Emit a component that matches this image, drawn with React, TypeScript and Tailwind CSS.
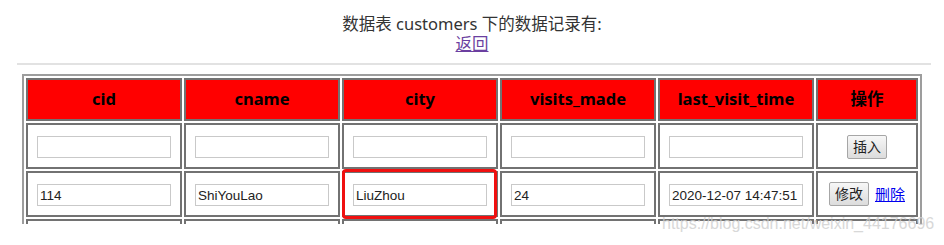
import React from "react";

const cols = ["cid", "cname", "city", "visits_made", "last_visit_time"];

function Cell({ children, last }: { children?: React.ReactNode; last?: boolean }) {
  return (
    <td
      className={`${last ? "w-[102px]" : "w-[156px]"} h-[46px] border-2 border-solid border-[#727272] bg-white p-0 text-center align-middle`}
    >
      {children}
    </td>
  );
}

function Field({ value }: { value?: string }) {
  return (
    <input
      type="text"
      defaultValue={value}
      className="box-border h-[22px] w-[134px] border border-solid border-[#c9c9c9] bg-white px-[2px] align-middle text-[13.5px] text-[#222] outline-none"
      style={{ fontFamily: '"Liberation Sans", Arial, sans-serif' }}
    />
  );
}

function Btn({ label }: { label: string }) {
  return (
    <button
      type="button"
      className="h-[24px] rounded-[2px] border border-solid border-[#a6a6a6] bg-gradient-to-b from-[#f7f7f7] to-[#dcdcdc] px-[5px] align-middle text-[14px] leading-[20px] text-[#222]"
    >
      {label}
    </button>
  );
}

export default function App() {
  return (
    <div
      className="relative h-[245px] w-[944px] overflow-hidden bg-white"
      style={{ fontFamily: '"Noto Sans", "Noto Sans CJK SC", sans-serif' }}
    >
      <div className="h-[224px] overflow-hidden">
        <div className="pt-[14px] text-center text-[16.5px] leading-[20px] text-[#333]">
          <div>数据表 customers 下的数据记录有:</div>
          <div>
            <a href="#" className="text-[#6b3fa0] underline">
              返回
            </a>
          </div>
        </div>
        <div className="ml-[17px] mt-[9px] h-[2px] w-[914px] bg-[#e2e2e2]" />
        <div className="mt-[9px] flex justify-center">
          <table className="w-[900px] border-separate border-spacing-[2px] border-2 border-solid border-[#9d9d9d]">
            <thead>
              <tr>
                {cols.map((c) => (
                  <th
                    key={c}
                    className="h-[43px] w-[156px] border-2 border-solid border-[#727272] bg-[#ff0000] p-0 text-center align-middle text-[16.5px] font-bold text-black"
                  >
                    {c}
                  </th>
                ))}
                <th className="h-[43px] w-[102px] border-2 border-solid border-[#727272] bg-[#ff0000] p-0 text-center align-middle text-[16.5px] font-bold text-black">
                  操作
                </th>
              </tr>
            </thead>
            <tbody>
              <tr>
                {cols.map((c) => (
                  <Cell key={c}>
                    <Field />
                  </Cell>
                ))}
                <Cell last>
                  <Btn label="插入" />
                </Cell>
              </tr>
              <tr>
                <Cell>
                  <Field value="114" />
                </Cell>
                <Cell>
                  <Field value="ShiYouLao" />
                </Cell>
                <Cell>
                  <Field value="LiuZhou" />
                </Cell>
                <Cell>
                  <Field value="24" />
                </Cell>
                <Cell>
                  <Field value="2020-12-07 14:47:51" />
                </Cell>
                <Cell last>
                  <div className="flex items-center justify-center gap-[6px]">
                    <Btn label="修改" />
                    <a href="#" className="text-[15px] leading-[20px] text-[#0000ee] underline">
                      删除
                    </a>
                  </div>
                </Cell>
              </tr>
              <tr>
                {cols.map((c) => (
                  <Cell key={c}>
                    <Field />
                  </Cell>
                ))}
                <Cell last />
              </tr>
            </tbody>
          </table>
        </div>
      </div>

      <div className="pointer-events-none absolute left-[342px] top-[169px] h-[50px] w-[155px] rounded-[4px] border-[3px] border-solid border-[#f01010]" />

      <div
        className="pointer-events-none absolute left-[662px] top-[214px] whitespace-nowrap text-[16px] leading-[20px] text-[#cfcfcf] opacity-80"
        style={{ fontFamily: '"Liberation Sans", Arial, sans-serif' }}
      >
        https://blog.csdn.net/weixin_44176696
      </div>
    </div>
  );
}
